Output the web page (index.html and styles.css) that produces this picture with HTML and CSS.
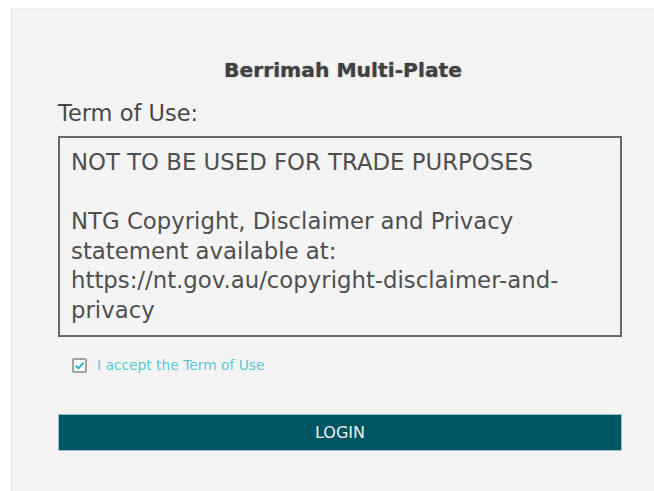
FILE: index.html
```html
<!DOCTYPE html>
<html>
<head>
<meta charset="utf-8">
<link rel="stylesheet" href="styles.css">
</head>
<body>
<div class="card">
  <h1 class="title">Berrimah Multi-Plate</h1>
  <div class="label">Term of Use:</div>
  <div class="terms">
    <p>NOT TO BE USED FOR TRADE PURPOSES</p>
    <p>NTG Copyright, Disclaimer and Privacy statement available at: https://nt.gov.au/copyright-disclaimer-and-privacy</p>
  </div>
  <label class="accept">
    <span class="check">
      <svg width="11" height="11" viewBox="0 0 10 10"><path d="M1.5 5.3 L4 7.6 L8.6 2.4" fill="none" stroke="#2bb3cc" stroke-width="1.9"/></svg>
    </span>
    <span class="accept-text">I accept the Term of Use</span>
  </label>
  <button class="login">LOGIN</button>
</div>
</body>
</html>
```
FILE: styles.css
```css
html, body {
  margin: 0;
  padding: 0;
  background: #ffffff;
}
body {
  padding: 8px 0 0 11px;
  font-family: "DejaVu Sans", Verdana, sans-serif;
  overflow: hidden;
}
.card {
  background: #f4f4f4;
  border-left: 1px solid #e4e4e4;
  border-top: 1px solid #ececec;
  min-height: 500px;
  padding: 49px 32px 0 46px;
  box-sizing: border-box;
}
.title {
  margin: 0;
  text-align: center;
  font-size: 20.3px;
  font-weight: bold;
  color: #404040;
  text-shadow: 0 0 1.5px #888;
  line-height: 24px;
  padding-left: 6px;
}
.label {
  margin-top: 18px;
  font-size: 22.5px;
  color: #484848;
  line-height: 26px;
}
.terms {
  margin-top: 10px;
  border: 2px solid #6a6a6a;
  height: 201px;
  box-sizing: border-box;
  padding: 10px 9px 0 11px;
  font-size: 22.8px;
  line-height: 29.6px;
  color: #4f4f4f;
}
.terms p {
  margin: 0 0 29.6px 0;
}
.accept {
  display: flex;
  align-items: center;
  gap: 10px;
  margin: 20px 0 0 14px;
  height: 16px;
}
.check {
  width: 11px;
  height: 11px;
  border: 2px solid #a0a0a0;
  border-radius: 2px;
  background: #fff;
  display: flex;
  align-items: center;
  justify-content: center;
}
.accept-text {
  font-size: 13.8px;
  color: #5ac8d8;
}
.login {
  display: block;
  width: 100%;
  margin-top: 41px;
  height: 37px;
  border: 1px solid #9cc2c8;
  background: #005563;
  color: #e6f0f2;
  font-family: "DejaVu Sans", Verdana, sans-serif;
  font-size: 16px;
}
```
